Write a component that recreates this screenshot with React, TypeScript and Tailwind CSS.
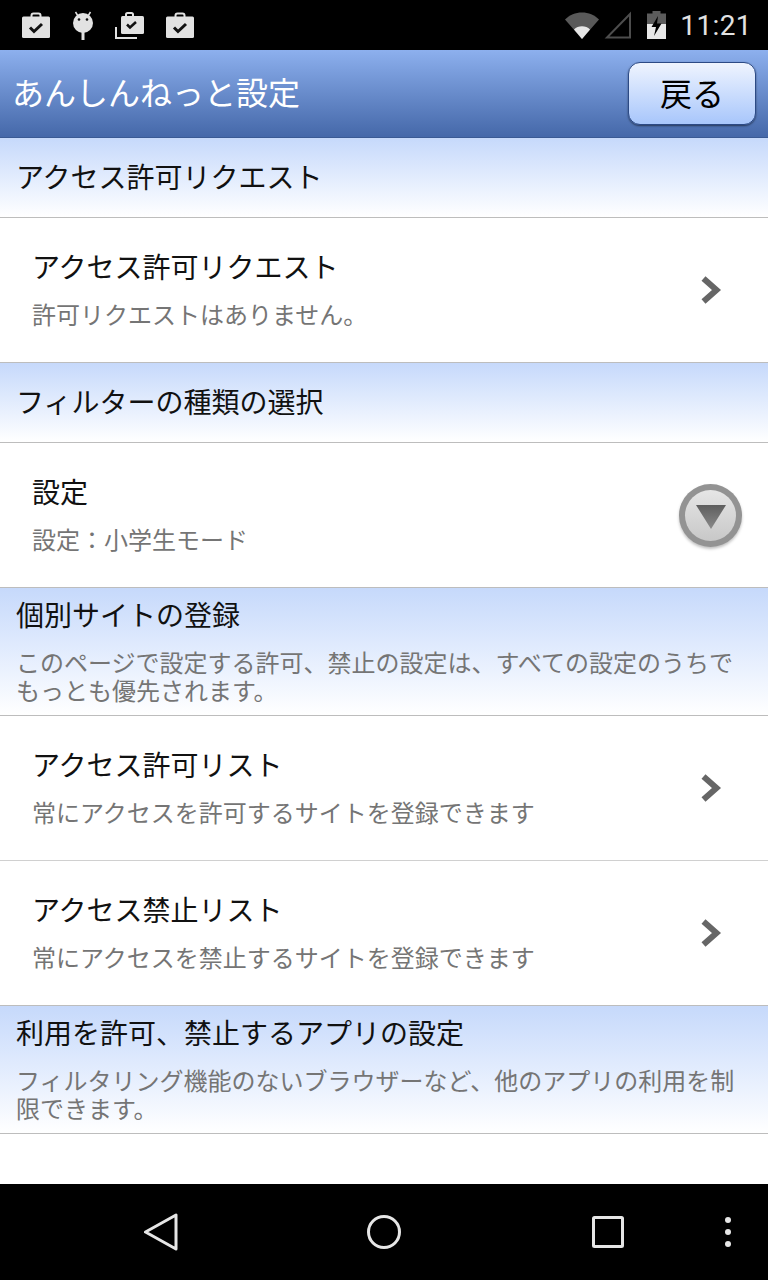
const cjk = "font-['Roboto','Noto_Sans_CJK_JP',sans-serif]";

function Bag({ size = 28 }: { size?: number }) {
  return (
    <svg width={size} height={size} viewBox="0 0 28 28" fill="none">
      <path d="M9.5 6V4.5a2 2 0 0 1 2-2h5a2 2 0 0 1 2 2V6" stroke="#e2e2e2" strokeWidth="2" />
      <rect x="0" y="5.5" width="28" height="21.5" rx="1.5" fill="#e2e2e2" />
      <path d="M8 16.5l4 4 8-7.5" stroke="#111" strokeWidth="3" />
    </svg>
  );
}

function StatusBar() {
  return (
    <div className="flex h-[50px] items-center bg-black pl-[22px] pr-[16px]">
      <Bag />
      <svg className="ml-[22px]" width="22" height="32" viewBox="0 0 22 32" fill="#e2e2e2">
        <circle cx="11" cy="14" r="10" />
        <rect x="9.5" y="22" width="3" height="9" />
        <path d="M3.5 3L6 7M18.5 3L16 7" stroke="#e2e2e2" strokeWidth="1.5" />
        <circle cx="7" cy="10.5" r="1.3" fill="#111" />
        <circle cx="15" cy="10.5" r="1.3" fill="#111" />
      </svg>
      <svg className="ml-[21px]" width="29" height="29" viewBox="0 0 29 29" fill="none">
        <path d="M1 16v11h21" stroke="#e2e2e2" strokeWidth="2" />
        <path d="M11 5V3.5a1.5 1.5 0 0 1 1.5-1.5h4A1.5 1.5 0 0 1 18 3.500V5" stroke="#e2e2e2" strokeWidth="2" />
        <rect x="6" y="5" width="23" height="18" rx="1.5" fill="#e2e2e2" />
        <path d="M12 13.500l3 3 6-5.500" stroke="#111" strokeWidth="2.500" />
      </svg>
      <div className="ml-[22px]">
        <Bag />
      </div>
      <svg className="ml-auto" width="34" height="28" viewBox="0 0 34 28">
        <path d="M0 8.500C4.500 4 10.500 1.500 17 1.500S29.500 4 34 8.500L17 28z" fill="#595959" />
        <path d="M9 18.500C11 16.500 14 15.300 17 15.300s6 1.200 8 3.200L17 28z" fill="#e6e6e6" />
      </svg>
      <svg className="ml-[5px]" width="28" height="28" viewBox="0 0 28 28" fill="none">
        <path d="M26 3v23.500H3z" stroke="#4d4d4d" strokeWidth="2" />
      </svg>
      <svg className="ml-[15px]" width="19" height="28" viewBox="0 0 19 28">
        <path d="M5.500 0h8v2.500H19V28H0V2.500h5.500z" fill="#5c5c5c" />
        <path d="M0 13h19v15H0z" fill="#e8e8e8" />
        <path d="M11 5L4.500 16H9l-2 9 7.500-12.500H10z" fill="#000" />
      </svg>
      <span className={`ml-[14px] mt-[2px] text-[28px] leading-none tracking-[0.4px] text-[#e2e2e2] ${cjk}`}>11:21</span>
    </div>
  );
}

function AppHeader() {
  return (
    <header className="flex h-[88px] items-center justify-between border-b border-[#3a5a94] bg-gradient-to-b from-[#8db0ee] to-[#4568a9] pl-[12px] pr-[12px]">
      <h1 className={`text-[32px] font-normal leading-none text-white ${cjk}`}>あんしんねっと設定</h1>
      <button className={`mb-[1px] flex h-[63px] w-[128px] items-center justify-center rounded-[12px] border border-[#2c4a85] bg-gradient-to-b from-[#eff4fe] to-[#a8c6fb] pt-[3px] text-[32px] leading-none text-black shadow-[0_1px_2px_rgba(0,0,0,0.5)] ${cjk}`}>
        戻る
      </button>
    </header>
  );
}

function SectionHeader({ title }: { title: string }) {
  return (
    <div className="flex h-[80px] items-center border-b border-[#bdbdbd] bg-gradient-to-b from-[#c6d9fb] to-white pl-[16px] pt-[2px]">
      <h2 className={`text-[28px] font-normal leading-none text-[#111] ${cjk}`}>{title}</h2>
    </div>
  );
}

function NoteHeader({ title, note }: { title: string; note: string }) {
  return (
    <div className="h-[128px] border-b border-[#bdbdbd] bg-gradient-to-b from-[#c6d9fb] to-white pl-[16px] pr-[16px] pt-[15px]">
      <h2 className={`text-[28px] font-normal leading-none text-[#111] ${cjk}`}>{title}</h2>
      <p className={`mt-[19px] text-[24px] leading-[28px] text-[#757575] ${cjk}`}>{note}</p>
    </div>
  );
}

function Chevron() {
  return (
    <svg className="mr-[46px]" width="21" height="28" viewBox="0 0 21 28" fill="none">
      <path d="M2.500 2.500l13 11.500-13 11.500" stroke="#666" strokeWidth="6" />
    </svg>
  );
}

function DropButton() {
  return (
    <div className="mr-[26px] flex h-[63px] w-[63px] items-center justify-center rounded-full bg-[#939393] shadow-[0_2px_3px_rgba(0,0,0,0.25)]">
      <div className="flex h-[51px] w-[51px] items-center justify-center rounded-full bg-gradient-to-b from-[#e6e6e6] to-[#c8c8c8]">
        <svg className="mt-[3px]" width="32" height="24" viewBox="0 0 32 24">
          <defs>
            <linearGradient id="tri" x1="0" y1="0" x2="0" y2="1">
              <stop offset="0" stopColor="#5e5e5e" />
              <stop offset="1" stopColor="#8a8a8a" />
            </linearGradient>
          </defs>
          <path d="M1 0h30L16 24z" fill="url(#tri)" />
        </svg>
      </div>
    </div>
  );
}

function Row({ title, sub, right, last }: { title: string; sub: string; right: React.ReactNode; last?: boolean }) {
  return (
    <div className={`flex h-[145px] items-center justify-between border-b bg-white pl-[32px] ${last ? "border-[#bdbdbd]" : "border-[#d0d0d0]"}`}>
      <div className="pt-[3px]">
        <div className={`text-[28px] leading-none text-[#111] ${cjk}`}>{title}</div>
        <div className={`mt-[21px] text-[24px] leading-none text-[#757575] ${cjk}`}>{sub}</div>
      </div>
      {right}
    </div>
  );
}

function NavBar() {
  return (
    <div className="relative flex h-[96px] items-center bg-black">
      <div className="flex items-center pl-[143px]">
        <svg width="35" height="38" viewBox="0 0 35 38" fill="none">
          <path d="M33 2v34L2.500 19z" stroke="#e6e6e6" strokeWidth="3" strokeLinejoin="round" />
        </svg>
        <svg className="ml-[189px]" width="34" height="34" viewBox="0 0 34 34" fill="none">
          <circle cx="17" cy="17" r="15.500" stroke="#e6e6e6" strokeWidth="3" />
        </svg>
        <svg className="ml-[191px]" width="32" height="32" viewBox="0 0 32 32" fill="none">
          <rect x="1.500" y="1.500" width="29" height="29" rx="1" stroke="#e6e6e6" strokeWidth="3" />
        </svg>
      </div>
      <div className="absolute right-[37px] top-[33px] flex flex-col gap-[6px]">
        <span className="h-[6px] w-[6px] rounded-full bg-[#e6e6e6]" />
        <span className="h-[6px] w-[6px] rounded-full bg-[#e6e6e6]" />
        <span className="h-[6px] w-[6px] rounded-full bg-[#e6e6e6]" />
      </div>
    </div>
  );
}

export default function App() {
  return (
    <div className="flex h-[1280px] w-[768px] flex-col overflow-hidden bg-white">
      <StatusBar />
      <AppHeader />
      <main className="flex-1">
        <SectionHeader title="アクセス許可リクエスト" />
        <Row title="アクセス許可リクエスト" sub="許可リクエストはありません。" right={<Chevron />} last />
        <SectionHeader title="フィルターの種類の選択" />
        <Row title="設定" sub="設定：小学生モード" right={<DropButton />} last />
        <NoteHeader title="個別サイトの登録" note="このページで設定する許可、禁止の設定は、すべての設定のうちでもっとも優先されます。" />
        <Row title="アクセス許可リスト" sub="常にアクセスを許可するサイトを登録できます" right={<Chevron />} />
        <Row title="アクセス禁止リスト" sub="常にアクセスを禁止するサイトを登録できます" right={<Chevron />} last />
        <NoteHeader title="利用を許可、禁止するアプリの設定" note="フィルタリング機能のないブラウザーなど、他のアプリの利用を制限できます。" />
      </main>
      <NavBar />
    </div>
  );
}
